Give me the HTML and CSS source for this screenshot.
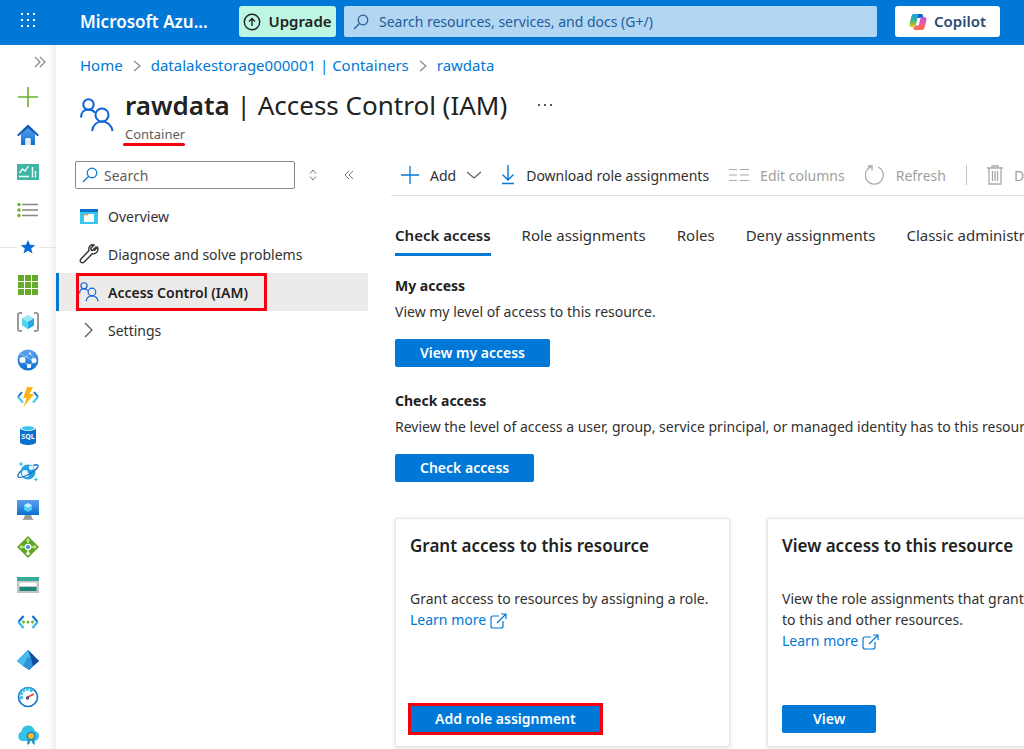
FILE: index.html
```html
<!DOCTYPE html>
<html lang="en">
<head>
    <meta charset="UTF-8">
    <meta name="viewport" content="width=device-width, initial-scale=1.0">
    <title>rawdata | Access Control (IAM)</title>
    <link rel="stylesheet" href="styles.css">
</head>
<body>
    <svg class="defs" width="0" height="0" aria-hidden="true">
        <defs>
            <linearGradient id="blue" x1="0" y1="0" x2="0" y2="1"><stop offset="0" stop-color="#5ea0ef"/><stop offset="1" stop-color="#0a6fd0"/></linearGradient>
            <linearGradient id="copA" x1="0" y1="0" x2="0" y2="1"><stop offset="0" stop-color="#1a9be8"/><stop offset=".5" stop-color="#35b890"/><stop offset="1" stop-color="#ffc400"/></linearGradient>
            <linearGradient id="copB" x1="0" y1="0" x2="0" y2="1"><stop offset="0" stop-color="#a85be0"/><stop offset=".5" stop-color="#ee5a9a"/><stop offset="1" stop-color="#ff7043"/></linearGradient>
            <symbol id="people" viewBox="0 0 34 34">
                <g fill="none" stroke="#0f62d8" stroke-width="2">
                    <circle cx="8.500" cy="6.500" r="5.200"/>
                    <path d="M1 19.500c0-5 3-8 7.500-8 3 0 5 1.200 6.500 3"/>
                    <circle cx="22" cy="17" r="6.500"/>
                    <path d="M12 33c1-6 5-9.500 10-9.500S31.500 27 32.500 33"/>
                </g>
            </symbol>
            <symbol id="search" viewBox="0 0 16 16">
                <g fill="none" stroke="currentColor" stroke-width="1.200"><circle cx="10" cy="6" r="4.800"/><path d="M6.500 9.500L1 15"/></g>
            </symbol>
            <symbol id="external" viewBox="0 0 18 16">
                <g fill="none" stroke="currentColor" stroke-width="1.200"><path d="M9 3H3Q1 3 1 5v8q0 2 2 2h8q2 0 2-2V8"/><path d="M7 10L16 1M11 1h5v5"/></g>
            </symbol>
        </defs>
    </svg>

    <header class="topbar">
        <button class="launcher" aria-label="Portal menu">
            <svg width="16" height="16" viewBox="0 0 16 16" fill="#fff"><path d="M1 1h2v2H1zM7 1h2v2H7zM13 1h2v2h-2zM1 7h2v2H1zM7 7h2v2H7zM13 7h2v2h-2zM1 13h2v2H1zM7 13h2v2H7zM13 13h2v2h-2z"/></svg>
        </button>
        <a class="brand" href="#">Microsoft Azu...</a>
        <button class="upgrade">
            <svg width="18" height="18" viewBox="0 0 18 18" fill="none" stroke="#222" stroke-width="1.400"><circle cx="9" cy="9" r="7.700"/><path d="M9 13V5.500M6 8.500l3-3 3 3"/></svg>
            Upgrade
        </button>
        <label class="global-search">
            <svg width="16" height="16"><use href="#search"/></svg>
            <input type="text" aria-label="Search resources" placeholder="Search resources, services, and docs (G+/)">
        </label>
        <button class="copilot">
            <svg width="18" height="18" viewBox="0 0 18 18">
                <path d="M5 1h7q1.500 0 2 2l.5 2H11q-2 0-2.500 2l-1.500 5q-.5 2-2.500 2H3q-3 0-2.500-3L2.500 3Q3 1 5 1z" fill="url(#copA)"/>
                <path d="M9.500 1H12q1.500 0 2 2l.5 2H11Q9.500 5 8.500 6z" fill="#0b5ed0"/>
                <path d="M13 17H6q-1.500 0-1.500-2.500Q6.500 14 7 12l2-6q.5-2 3-2h3q3 0 2.500 3L15.500 15q-.5 2-2.500 2z" fill="url(#copB)"/>
                <path d="M8.500 5h3L9.700 12.500H6.800z" fill="#fff"/>
            </svg>
            Copilot
        </button>
    </header>

    <div class="shell">
        <nav class="rail" aria-label="Favorites">
            <button class="expand" aria-label="Expand menu">
                <svg width="12" height="12" viewBox="0 0 12 12" fill="none" stroke="#888" stroke-width="1.200"><path d="M1 1l5 5-5 5M6 1l5 5-5 5"/></svg>
            </button>
            <div class="rail-items">
                <a href="#" aria-label="Create a resource"><svg viewBox="0 0 22 22"><path d="M11 1v20M1 11h20" stroke="#6bb22b" stroke-width="1.600"/></svg></a>
                <a href="#" aria-label="Home"><svg viewBox="0 0 22 22"><path d="M4 10l7-7 7 7v11h-4.500v-6h-5v6H4z" fill="url(#blue)"/><path d="M8.500 14h5v7h-5z" fill="#e4ecf4"/><path d="M0 11L11 .5 22 11l-1.500 1.200L11 4l-9.500 8.200z" fill="#0b5cb5"/></svg></a>
                <a href="#" aria-label="Dashboard"><svg viewBox="0 0 22 22"><path d="M0 3h22v16H0z" fill="#3fb5a5"/><path d="M2.500 12l3-4 2.500 2 3.500-5" fill="none" stroke="#fff" stroke-width="1.300"/><path d="M2 15.500h10M15.500 6v10.500M18.500 10v6.500" stroke="#e8fffb" stroke-width="1.500"/></svg></a>
                <a href="#" aria-label="All services"><svg viewBox="0 0 22 22"><path d="M5 5.500h16M5 11h16M5 16.500h16" stroke="#888" stroke-width="1.600"/><g fill="#6bb22b"><circle cx="2" cy="5.500" r="1.700"/><circle cx="2" cy="11" r="1.700"/><circle cx="2" cy="16.500" r="1.700"/></g></svg></a>
                <span class="favorites"><svg viewBox="0 0 22 22"><path d="M11 4l2 4.800 5.200.4-4 3.300 1.300 5-4.500-2.700-4.500 2.700 1.300-5-4-3.300 5.200-.4z" fill="#0b6bd6"/></svg></span>
                <a href="#" aria-label="All resources"><svg viewBox="0 0 22 22"><path d="M1 1h6v6H1zM8 1h6v6H8zM15 1h6v6h-6zM1 8h6v6H1zM8 8h6v6H8zM15 8h6v6h-6zM1 15h6v6H1zM8 15h6v6H8zM15 15h6v6h-6z" fill="#66aa2c"/></svg></a>
                <a href="#" aria-label="Resource groups"><svg viewBox="0 0 22 22"><path d="M5 2H3Q1 2 1 4v14q0 2 2 2h2M17 2h2q2 0 2 2v14q0 2-2 2h-2" fill="none" stroke="#999" stroke-width="2"/><path d="M11 4l6 3.500v7L11 18l-6-3.500v-7z" fill="#53d3f0"/><path d="M5 7.500L11 4l6 3.500-6 3.500z" fill="#9be9f8"/><path d="M11 11l6-3.500v7L11 18z" fill="#26a8de"/></svg></a>
                <a href="#" aria-label="App Services"><svg viewBox="0 0 22 22"><circle cx="11" cy="11" r="10.500" fill="url(#blue)"/><path d="M5 11l8-7 5 8-6 5zM2 4l17 9" fill="none" stroke="#8fd0fa"/><g fill="#fff"><circle cx="5.500" cy="11" r="3"/><circle cx="17" cy="11.500" r="2.500"/><circle cx="12" cy="17" r="2.200"/><circle cx="13" cy="4.500" r="1"/></g></svg></a>
                <a href="#" aria-label="Function App"><svg viewBox="0 0 22 22"><g fill="none" stroke-width="2"><path d="M5 6L1 11M17 6l4 5" stroke="#1474d4"/><path d="M1 11l5 5.500M21 11l-5 5.500" stroke="#45c8ee"/></g><path d="M10 1h6l-3.500 7H17L6.500 21l3-9H6z" fill="#fdb414"/></svg></a>
                <a href="#" aria-label="SQL databases"><svg viewBox="0 0 22 22"><path d="M3 4v14c0 4 16 4 16 0V4z" fill="#0870cd"/><ellipse cx="11" cy="4" rx="8" ry="3" fill="#e8f7fd"/><ellipse cx="11" cy="4.200" rx="6" ry="2" fill="#39c4ed"/><text x="11" y="14.500" text-anchor="middle" class="sql">SQL</text></svg></a>
                <a href="#" aria-label="Azure Cosmos DB"><svg viewBox="0 0 22 22"><circle cx="11" cy="11" r="7.500" fill="#259fe0"/><path d="M5 14q-1-5 3-5 3 0 3 3 2 0 1 3-4 3-7-1zM12 5q4-1 5 3-3 2-5 0z" fill="#e2f6fd"/><path d="M4 10C-1 15 0 18 7 15.500S22 7 21 4.500q-1-1.500-5 0" fill="none" stroke="#1873c5" stroke-width="1.300"/><path d="M4 0l.8 2.200L7 3l-2.200.8L4 6l-.8-2.200L1 3l2.200-.8zM19 16l.7 1.800 1.800.7-1.800.7-.7 1.800-.7-1.800-1.800-.7 1.800-.7z" fill="#3ec5ee"/></svg></a>
                <a href="#" aria-label="Virtual machines"><svg viewBox="0 0 22 22"><path d="M0 1h22v15H0z" fill="url(#blue)"/><path d="M8 16h6l1.500 4h-9z" fill="#999"/><path d="M5.500 20h11v1h-11z" fill="#aaa"/><path d="M11 4l4 2.300v4.500L11 13l-4-2.200V6.300z" fill="#4fd0f0"/><path d="M7 6.300L11 4l4 2.300-4 2.400z" fill="#bff2fc"/></svg></a>
                <a href="#" aria-label="Load balancers"><svg viewBox="0 0 22 22"><path d="M11 0l11 11-11 11L0 11z" fill="#5ea624"/><path d="M11 7V2.500M11 11H3M11 11h8M11 14v5" stroke="#d6f5b4" stroke-width="1.600"/><path d="M8.500 5L11 2l2.500 3zM5 8.500L2 11l3 2.500zM17 8.500l3 2.500-3 2.500z" fill="#b5e27e"/><circle cx="11" cy="11" r="3.300" fill="#fff"/><circle cx="11" cy="11" r="2" fill="#3b8edb"/><circle cx="11" cy="17.500" r="1.800" fill="#fff"/></svg></a>
                <a href="#" aria-label="Storage accounts"><svg viewBox="0 0 22 22"><path d="M0 3h22v16H0z" fill="#c4c4c4"/><path d="M0 3h22v4H0z" fill="#36ad9c"/><path d="M2.500 8.500h17V12h-17z" fill="#fff"/><path d="M2.500 13h17v4h-17z" fill="#1c8577"/></svg></a>
                <a href="#" aria-label="Virtual networks"><svg viewBox="0 0 22 22"><g fill="none" stroke-width="2.200"><path d="M6.500 5L1.500 11M15.500 5l5 6" stroke="#1474d4"/><path d="M1.500 11l5 6M20.500 11l-5 6" stroke="#35b8e8"/></g><g fill="#70b62e"><circle cx="6.500" cy="11" r="1.500"/><circle cx="11" cy="11" r="1.500"/><circle cx="15.500" cy="11" r="1.500"/></g></svg></a>
                <a href="#" aria-label="Microsoft Entra ID"><svg viewBox="0 0 22 22"><path d="M11 1l11 11-10 9L0 12z" fill="#1d6fc4"/><path d="M11 1l4 8-8 9-7-6z" fill="#43bceb"/><path d="M11 8l4 1 1 8-4 4-6-4z" fill="#2e90db"/><path d="M11 1l11 11-6 5-2-8z" fill="#134c9a"/></svg></a>
                <a href="#" aria-label="Monitor"><svg viewBox="0 0 22 22"><circle cx="11" cy="11" r="9.500" fill="#fff" stroke="#2079ca" stroke-width="1.700"/><path d="M5 13a6.500 6.500 0 0 1 11-7" fill="none" stroke="#42c2e8" stroke-width="3.500" stroke-dasharray="3 1"/><path d="M10 11.500l7-3.500" stroke="#e2463e" stroke-width="1.800"/><circle cx="10.500" cy="12" r="1.700" fill="#555"/></svg></a>
                <a href="#" aria-label="Advisor"><svg viewBox="0 0 22 22"><path d="M5 17a5 5 0 0 1-.5-9.500C5 3.500 8 1.500 11.500 1.500S17 4 18 7c3 .5 4 3 4 5s-1.500 5-5 5z" fill="#38c1e8"/><path d="M11 13l-1 8 2.500-1.500L14 15zM17 13l1 8-2.500-1.500L14 15z" fill="#249ab0"/><circle cx="14" cy="12" r="4.500" fill="#1587cb"/><circle cx="14" cy="12" r="3" fill="#ffb61c"/></svg></a>
            </div>
        </nav>

        <main class="blade">
            <nav class="breadcrumb" aria-label="Breadcrumb">
                <a href="#">Home</a>
                <svg width="8" height="12" viewBox="0 0 8 12"><path d="M1 1l6 5-6 5" fill="none" stroke="#888" stroke-width="1.200"/></svg>
                <a href="#">datalakestorage000001 | Containers</a>
                <svg width="8" height="12" viewBox="0 0 8 12"><path d="M1 1l6 5-6 5" fill="none" stroke="#888" stroke-width="1.200"/></svg>
                <a href="#">rawdata</a>
            </nav>

            <div class="blade-title">
                <svg width="34" height="34"><use href="#people"/></svg>
                <div>
                    <h1><b>rawdata</b> | Access Control (IAM)</h1>
                    <p class="subtitle">Container</p>
                </div>
                <button class="more" aria-label="More">
                    <svg width="14" height="2" viewBox="0 0 14 2" fill="#555"><path d="M0 0h2v2H0zM6 0h2v2H6zM12 0h2v2h-2z"/></svg>
                </button>
            </div>

            <div class="blade-body">
                <nav class="menu" aria-label="Resource menu">
                    <div class="menu-tools">
                        <label class="menu-search">
                            <svg width="16" height="16"><use href="#search"/></svg>
                            <input type="text" aria-label="Search menu" placeholder="Search">
                        </label>
                        <button aria-label="Expand all"><svg width="8" height="12" viewBox="0 0 8 12" fill="none" stroke="#777"><path d="M1 4.500L4 1l3 3.500M1 7.500L4 11l3-3.500"/></svg></button>
                        <button aria-label="Collapse menu"><svg width="10" height="10" viewBox="0 0 10 10" fill="none" stroke="#777"><path d="M5 1L1 5l4 4M9 1L5 5l4 4"/></svg></button>
                    </div>
                    <a class="menu-item" href="#">
                        <svg width="20" height="20" viewBox="0 0 20 20"><path d="M1 3h18v15H1z" fill="#38c6ee"/><path d="M1 3h18v3H1z" fill="#0b72cc"/><path d="M5 8h10v8H5z" fill="#fff"/><path d="M5 8h4v1.500H5z" fill="#f5a24a"/></svg>
                        Overview
                    </a>
                    <a class="menu-item" href="#">
                        <svg width="20" height="20" viewBox="0 0 20 20"><path d="M17.500 2.500l-4 4-1-.2-.7-2L15 1c-3-.8-6 1.700-5 5.500l-8 8.500c-2 2.500 1 5 3.200 3l8-8.300c4 1 6.800-3 5.300-6.500l-3.500 3.500" fill="none" stroke="#333" stroke-width="1.400"/></svg>
                        Diagnose and solve problems
                    </a>
                    <a class="menu-item selected" href="#">
                        <svg width="20" height="20"><use href="#people"/></svg>
                        Access Control (IAM)
                    </a>
                    <a class="menu-item" href="#">
                        <svg width="20" height="20" viewBox="0 0 20 20"><path d="M6 3l7 7-7 7" fill="none" stroke="#555" stroke-width="1.200"/></svg>
                        Settings
                    </a>
                </nav>

                <section class="content">
                    <div class="toolbar">
                        <button><svg width="18" height="18" viewBox="0 0 18 18"><path d="M9 0v18M0 9h18" stroke="#0078d4" stroke-width="1.300"/></svg>Add<svg class="chevron" width="14" height="8" viewBox="0 0 14 8"><path d="M0 1l7 6 7-6" fill="none" stroke="#555" stroke-width="1.100"/></svg></button>
                        <button><svg width="14" height="20" viewBox="0 0 14 20"><path d="M7 0v15M1.500 9.500L7 15l5.500-5.500M1 18.500h12" fill="none" stroke="#0078d4" stroke-width="1.400"/></svg>Download role assignments</button>
                        <button disabled><svg width="20" height="14" viewBox="0 0 20 14"><path d="M0 1.500h8M11 1.500h9M0 7h8M11 7h9M0 12.500h8M11 12.500h9" stroke="#aaa" stroke-width="1.200"/></svg>Edit columns</button>
                        <button disabled><svg width="20" height="20" viewBox="0 0 20 20"><path d="M13 2a9 9 0 1 1-7-.2M2.500 1H7v4.500" fill="none" stroke="#aaa" stroke-width="1.300"/></svg>Refresh</button>
                        <span class="divider"></span>
                        <button disabled><svg width="16" height="20" viewBox="0 0 16 20"><path d="M0 3h16M5 3V1h6v2M2 3v16h12V3M5.500 6v10M8 6v10M10.500 6v10" fill="none" stroke="#aaa" stroke-width="1.300"/></svg>Delete</button>
                    </div>

                    <div class="tabs" role="tablist">
                        <button class="active" role="tab" aria-selected="true">Check access</button>
                        <button role="tab">Role assignments</button>
                        <button role="tab">Roles</button>
                        <button role="tab">Deny assignments</button>
                        <button role="tab">Classic administrators</button>
                    </div>

                    <div class="access-block">
                        <h2>My access</h2>
                        <p>View my level of access to this resource.</p>
                        <button class="btn">View my access</button>
                    </div>
                    <div class="access-block">
                        <h2>Check access</h2>
                        <p>Review the level of access a user, group, service principal, or managed identity has to this resource.</p>
                        <button class="btn">Check access</button>
                    </div>

                    <div class="cards">
                        <article class="card">
                            <h3>Grant access to this resource</h3>
                            <p>Grant access to resources by assigning a role.<br>
                            <a href="#">Learn more <svg width="18" height="16"><use href="#external"/></svg></a></p>
                            <button class="btn marked">Add role assignment</button>
                        </article>
                        <article class="card">
                            <h3>View access to this resource</h3>
                            <p>View the role assignments that grant access<br>
                            to this and other resources.<br>
                            <a href="#">Learn more <svg width="18" height="16"><use href="#external"/></svg></a></p>
                            <button class="btn wide">View</button>
                        </article>
                    </div>
                </section>
            </div>
        </main>
    </div>
</body>
</html>
```
FILE: styles.css
```css
*, *::before, *::after {
    box-sizing: border-box;
}
body {
    margin: 0;
    height: 100vh;
    display: flex;
    flex-direction: column;
    overflow: hidden;
    background-color: #fff;
    color: #323130;
    font-family: "Noto Sans", "Open Sans", sans-serif;
    font-size: 14px;
    line-height: 21px;
}
h1, h2, h3, p {
    margin: 0;
}
a {
    color: #0078d4;
    text-decoration: none;
}
button {
    border: none;
    padding: 0;
    background: none;
    color: inherit;
    font: inherit;
    white-space: nowrap;
    cursor: pointer;
}
input {
    flex: 1;
    min-width: 0;
    border: none;
    padding: 0;
    outline: none;
    background: none;
    color: inherit;
    font: inherit;
}
svg {
    flex: none;
}
.defs {
    position: absolute;
}

/* top bar */
.topbar {
    display: flex;
    align-items: center;
    height: 45px;
    flex: none;
    padding: 0 24px 2px 20px;
    background-color: #0078d7;
}
.launcher {
    display: flex;
    width: 60px;
    padding-bottom: 4px;
}
.brand {
    width: 159px;
    color: #fff;
    font-size: 17px;
    font-weight: 600;
    white-space: nowrap;
}
.upgrade, .copilot {
    display: flex;
    align-items: center;
    justify-content: center;
    gap: 7px;
    height: 31px;
    border-radius: 3px;
    font-size: 15px;
    font-weight: 600;
}
.upgrade {
    width: 97px;
    background-color: #bdf6e2;
    color: #222;
}
.copilot {
    width: 105px;
    background-color: #fff;
    color: #2b4a6f;
}
.global-search {
    flex: 1;
    display: flex;
    align-items: center;
    gap: 10px;
    height: 31px;
    margin: 0 18px 0 8px;
    padding: 0 9px;
    border-radius: 2px;
    background-color: #b3d6f2;
    color: #1f5c99;
}
.global-search input::placeholder {
    color: #1f5c99;
}

/* favorites rail */
.shell {
    flex: 1;
    display: flex;
    min-height: 0;
}
.rail {
    display: flex;
    flex-direction: column;
    flex: none;
    width: 56px;
    padding: 11px 0 3px;
    background: linear-gradient(to right, #fff 48px, #f1f1f1);
}
.expand {
    display: flex;
    align-self: flex-end;
    margin: 0 10px 18px 0;
}
.rail-items {
    flex: 1;
    display: flex;
    flex-direction: column;
    justify-content: space-between;
}
.rail-items > * {
    display: flex;
    justify-content: center;
    align-items: center;
}
.rail-items svg {
    width: 22px;
    height: 22px;
}
.favorites::before, .favorites::after {
    content: "";
    flex: 1;
    height: 1px;
    background-color: #e6e6e6;
}
.sql {
    fill: #fff;
    font-size: 7px;
    font-weight: 700;
}

/* blade */
.blade {
    flex: 1;
    min-width: 0;
    overflow: hidden;
}
.breadcrumb {
    display: flex;
    align-items: center;
    gap: 10px;
    padding: 10px 24px 0;
    font-size: 15px;
    white-space: nowrap;
}
.blade-title {
    display: flex;
    padding: 10px 24px 0;
    white-space: nowrap;
}
.blade-title > svg {
    margin: 12px 11px 0 0;
}
.blade-title h1 {
    color: #222;
    font-size: 26px;
    font-weight: 400;
    line-height: 38px;
}
.blade-title b {
    font-weight: 600;
}
.subtitle {
    position: relative;
    width: max-content;
    color: #605e5c;
    font-size: 13px;
    line-height: 20px;
}
.subtitle::after {
    content: "";
    position: absolute;
    left: -2px;
    right: 0;
    bottom: -2px;
    height: 3px;
    border-radius: 2px;
    background-color: #f5000f;
}
.more {
    display: flex;
    align-items: center;
    height: 38px;
    margin-left: 31px;
}
.blade-body {
    display: flex;
    margin-top: 11px;
}

/* resource menu */
.menu {
    flex: none;
    width: 312px;
}
.menu-tools {
    display: flex;
    align-items: center;
    height: 40px;
    padding-left: 19px;
    margin-bottom: 2px;
}
.menu-tools button {
    display: flex;
    justify-content: center;
    width: 36px;
}
.menu-search {
    display: flex;
    align-items: center;
    gap: 6px;
    width: 220px;
    height: 28px;
    padding: 0 6px;
    border: 1px solid #8a8886;
    border-radius: 2px;
    color: #0078d4;
}
.menu-search input::placeholder {
    color: #605e5c;
}
.menu-item {
    display: flex;
    align-items: center;
    gap: 9px;
    height: 38px;
    padding-left: 23px;
    color: #323130;
    white-space: nowrap;
}
.selected {
    position: relative;
    background-color: #edebe9;
    box-shadow: inset 3px 0 #0078d4;
    color: #222;
    font-weight: 600;
}
.selected::after {
    content: "";
    position: absolute;
    top: 0;
    bottom: 0;
    left: 20px;
    width: 191px;
    border: 3px solid #f5000f;
}

/* content */
.content {
    flex: 1;
    min-width: 0;
    margin-left: 23px;
}
.toolbar {
    display: flex;
    align-items: center;
    gap: 20px;
    height: 41px;
    padding-left: 10px;
    border-bottom: 1px solid #e1dfdd;
}
.toolbar button {
    display: flex;
    align-items: center;
    gap: 11px;
}
.toolbar button:disabled {
    color: #a19f9d;
    cursor: default;
}
.divider {
    flex: none;
    width: 1px;
    height: 20px;
    background-color: #c8c6c4;
}
.tabs {
    display: flex;
    gap: 31px;
    padding: 25px 0 0 4px;
    font-size: 15px;
}
.tabs button {
    height: 35px;
    padding: 2px 0 8px;
}
.tabs .active {
    box-shadow: inset 0 -3px #0078d4;
    color: #222;
    font-weight: 600;
}
.access-block {
    padding: 19px 0 0 4px;
    margin-bottom: 4px;
    white-space: nowrap;
}
.access-block h2 {
    color: #222;
    font-size: 14px;
    font-weight: 700;
    line-height: 21px;
}
.access-block p {
    margin: 5px 0 17px;
}
.btn {
    display: block;
    height: 28px;
    padding: 0 25px 1px;
    border-radius: 2px;
    background-color: #0078d7;
    color: #fff;
    font-weight: 600;
}
.wide {
    padding: 0 31px 1px;
}
.marked {
    border-radius: 0;
    outline: 3px solid #f5000f;
    outline-offset: -1px;
}
.cards {
    display: flex;
    gap: 37px;
    padding: 32px 0 0 4px;
}
.card {
    display: flex;
    flex-direction: column;
    align-items: flex-start;
    flex: none;
    width: 335px;
    min-height: 229px;
    padding: 14px 14px 13px;
    border: 1px solid #e6e6e6;
    border-radius: 2px;
    box-shadow: 0 1px 4px rgba(0, 0, 0, 0.15);
    white-space: nowrap;
}
.card h3 {
    margin-bottom: 30px;
    color: #222;
    font-size: 17px;
    font-weight: 600;
    line-height: 25px;
}
.card .btn {
    margin-top: auto;
}
.card svg {
    vertical-align: -4px;
}
```
